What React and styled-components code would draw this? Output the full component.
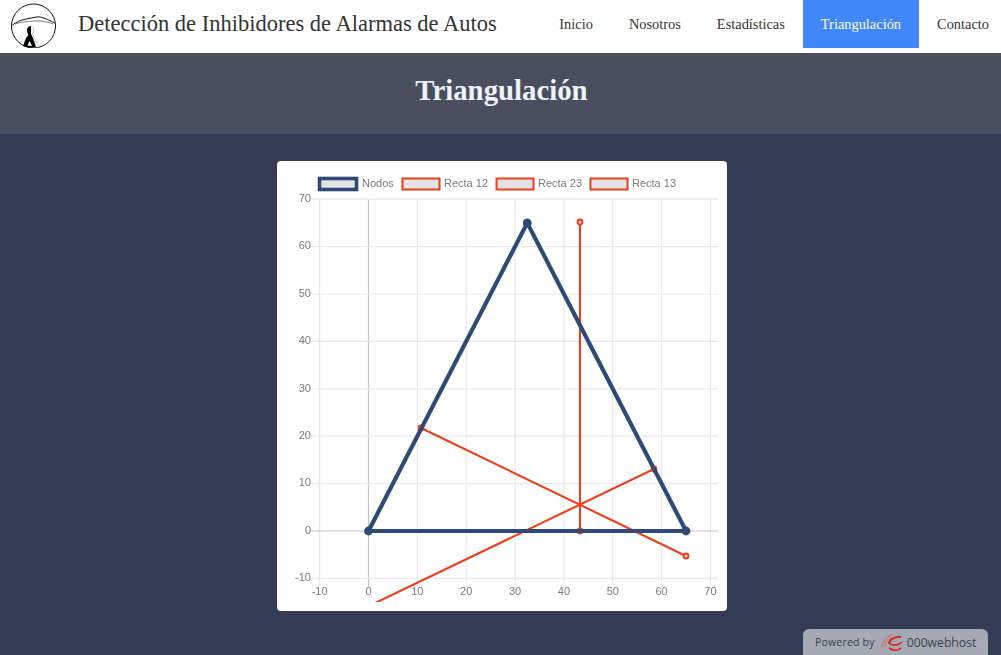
import React from "react";
import styled, { createGlobalStyle } from "styled-components";

const Global = createGlobalStyle`
  html, body { margin: 0; padding: 0; height: 100%; }
  body { background: #343b55; font-family: "Liberation Serif", serif; overflow: hidden; }
`;

const Page = styled.div`
  min-height: 655px;
  display: flex;
  flex-direction: column;
  background: #343b55;
`;
const NavBar = styled.header`
  height: 53px;
  background: #fff;
  display: flex;
  align-items: flex-start;
  justify-content: space-between;
  padding-left: 10px;
  box-sizing: border-box;
`;
const Brand = styled.div`
  display: flex;
  align-items: center;
  height: 48px;
  gap: 22px;
`;
const Title = styled.span`
  font-size: 22.5px;
  color: #333;
  white-space: nowrap;
`;
const Menu = styled.nav`
  display: flex;
`;
const MenuItem = styled.a`
  height: 48px;
  display: flex;
  align-items: center;
  padding: 0 18px;
  box-sizing: border-box;
  font-size: 14.4px;
  color: ${(p) => (p.$active ? "#fff" : "#333")};
  background: ${(p) => (p.$active ? "#3f87fa" : "transparent")};
  ${(p) => (p.$last ? "padding-right: 12px;" : "")}
`;
const Banner = styled.div`
  height: 81px;
  background: #494f5f;
  display: flex;
  align-items: center;
  justify-content: center;
`;
const Heading = styled.h1`
  margin: 0;
  font-size: 28.8px;
  font-weight: bold;
  color: #eef2fb;
  position: relative;
  top: -3px;
  left: 1px;
`;
const Main = styled.main`
  flex: 1;
  display: flex;
  justify-content: center;
  padding: 27px 0 0 2px;
`;
const Card = styled.div`
  width: 450px;
  height: 450px;
  background: #fff;
  border-radius: 4px;
  overflow: hidden;
`;
const ChartSvg = styled.svg`
  display: block;
  filter: blur(0.4px);
`;
const Badge = styled.div`
  position: fixed;
  right: 13px;
  bottom: 0;
  width: 185px;
  height: 26px;
  background: #a5a9b4;
  border-radius: 6px 6px 0 0;
  display: flex;
  align-items: center;
  padding-left: 12px;
  box-sizing: border-box;
  font-family: "Open Sans", "Liberation Sans", sans-serif;
  color: #3d4048;
`;
const BadgeLabel = styled.span`
  font-size: 10.5px;
  letter-spacing: 0.2px;
  margin-right: 6px;
`;
const BadgeBrand = styled.span`
  font-size: 12.2px;
  margin-left: 1px;
`;

const X = (v) => 91.5 + v * 4.885;
const Y = (v) => 370 - v * 4.74;
const LX = (px) => px - 277;
const LY = (py) => py - 161;
const ticks = [-10, 0, 10, 20, 30, 40, 50, 60, 70];
const BLUE = "#2f4b75";
const RED = "#e8401f";

const lines = [
  [[421, 428], [686, 556]],
  [[654, 469], [372, 604.5]],
  [[580, 222], [580, 531]],
];
const legend = [
  ["Nodos", 44, BLUE, 85],
  ["Recta 12", 126, RED, 167],
  ["Recta 23", 220, RED, 261],
  ["Recta 13", 314, RED, 355],
];

function Chart() {
  return (
    <ChartSvg width="450" height="450" viewBox="0 0 450 450" fontFamily="'Liberation Sans', sans-serif">
      <defs>
        <clipPath id="plot">
          <rect x="0" y="0" width="450" height="441" />
        </clipPath>
      </defs>
      {legend.map(([label, bx, color, tx], i) => (
        <g key={label}>
          <rect
            x={i === 0 ? bx - 1.5 : bx - 0.5}
            y="17.5"
            width="37"
            height="11"
            fill="#e4e4e4"
            stroke={color}
            strokeWidth={i === 0 ? 3.6 : 2}
          />
          <text x={tx} y="26" fontSize="11" fill="#7a7a7a">{label}</text>
        </g>
      ))}
      {ticks.map((t) => (
        <line key={"v" + t} x1={X(t)} x2={X(t)} y1={38} y2={Y(-10) + 8} stroke={t === 0 ? "#c4c4c4" : "#e8e8e8"} strokeWidth="1.2" />
      ))}
      {ticks.map((t) => (
        <line key={"h" + t} x1={34} x2={441} y1={Y(t)} y2={Y(t)} stroke={t === 0 ? "#c4c4c4" : "#e8e8e8"} strokeWidth="1.2" />
      ))}
      {ticks.map((t) => (
        <text key={"yl" + t} x="34" y={Y(t) + 2.8} fontSize="11" fill="#7a7a7a" textAnchor="end">{t}</text>
      ))}
      {ticks.map((t) => (
        <text key={"xl" + t} x={X(t)} y={434} fontSize="11" fill="#7a7a7a" textAnchor="middle">{t}</text>
      ))}
      <g clipPath="url(#plot)">
        {lines.map(([a, b], i) => (
          <line key={i} x1={LX(a[0])} y1={LY(a[1])} x2={LX(b[0])} y2={LY(b[1])} stroke={RED} strokeWidth="2.1" />
        ))}
        {[[421, 428], [654, 469], [580, 531], [686, 556], [580, 222]].map(([x, y]) => (
          <circle key={x} cx={LX(x)} cy={LY(y)} r="2.5" fill="#f6c9bd" stroke={RED} strokeWidth="1.8" />
        ))}
        <path
          d={`M${X(0)} ${Y(0)} L${X(32.5)} ${Y(65)} L${X(65)} ${Y(0)} Z`}
          fill="none"
          stroke={BLUE}
          strokeWidth="4.2"
          strokeLinejoin="round"
        />
        {[[0, 0], [32.5, 65], [65, 0]].map(([x, y]) => (
          <circle key={x} cx={X(x)} cy={Y(y)} r="4.4" fill={BLUE} />
        ))}
      </g>
    </ChartSvg>
  );
}

function Logo() {
  return (
    <svg width="46" height="48" viewBox="0 0 46 48" aria-hidden="true">
      <circle cx="23.5" cy="26" r="22" fill="#fff" stroke="#111" strokeWidth="1" />
      <path d="M2.5 25 C10 19 18 19 26 17 C32 16 38 20 45 23" fill="none" stroke="#111" strokeWidth="1" />
      <path d="M5 24 C12 22 18 21 28 21 C34 21 38 22 43 24" fill="none" stroke="#444" strokeWidth="0.7" />
      <path
        d="M17 30 C17 27.5 19 26 21 26 L21 34 L23 38 L26 47 C23 48 18 48 13 46 L16 38 L18.5 35 C17.5 33.5 17 32 17 30 Z"
        fill="#000"
      />
      <path d="M17.5 45.5 L19.5 41 L22 46 Z" fill="#fff" />
      <path d="M21 26 C24 27 24.5 31 22.5 34 L29 47" fill="none" stroke="#bbb" strokeWidth="0.8" />
    </svg>
  );
}

function HostMark() {
  return (
    <svg width="25" height="20" viewBox="0 0 25 20" aria-hidden="true">
      <path d="M1 15 C2 9 6 4 12 2" fill="none" stroke="#e0605c" strokeWidth="1.2" strokeDasharray="2 1" />
      <path d="M4 14 C5 10 7 7 10 5" fill="none" stroke="#e0605c" strokeWidth="1" strokeDasharray="2 1" />
      <path d="M8 12 C8 8 13 4 20 5" fill="none" stroke="#dd2218" strokeWidth="1.8" />
      <path d="M9 12 C13 14 18 13 21 10" fill="none" stroke="#dd2218" strokeWidth="1.6" />
      <path d="M8 16 C12 19 17 19 20 16" fill="none" stroke="#dd2218" strokeWidth="1.6" />
    </svg>
  );
}

export default function App() {
  const items = ["Inicio", "Nosotros", "Estadísticas", "Triangulación", "Contacto"];
  return (
    <Page>
      <Global />
      <NavBar>
        <Brand>
          <Logo />
          <Title>Detección de Inhibidores de Alarmas de Autos</Title>
        </Brand>
        <Menu>
          {items.map((it, i) => (
            <MenuItem key={it} $active={it === "Triangulación"} $last={i === items.length - 1}>{it}</MenuItem>
          ))}
        </Menu>
      </NavBar>
      <Banner>
        <Heading>Triangulación</Heading>
      </Banner>
      <Main>
        <Card>
          <Chart />
        </Card>
      </Main>
      <Badge>
        <BadgeLabel>Powered by</BadgeLabel>
        <HostMark />
        <BadgeBrand>000webhost</BadgeBrand>
      </Badge>
    </Page>
  );
}
